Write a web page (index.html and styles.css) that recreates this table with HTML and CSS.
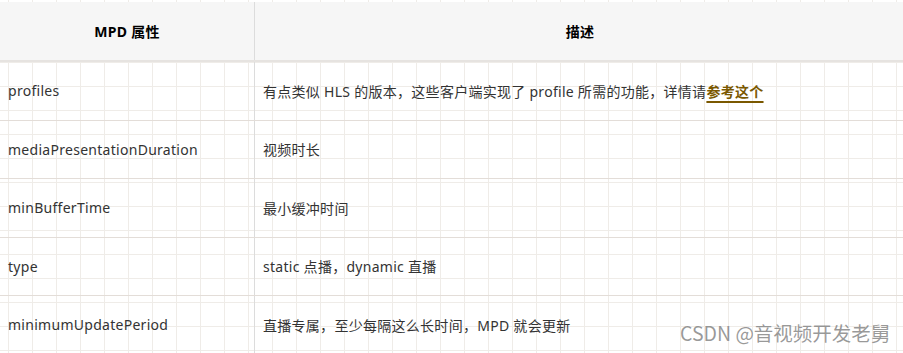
FILE: index.html
```html
<!DOCTYPE html>
<html lang="zh-CN">
<head>
<meta charset="utf-8">
<title>MPD 属性</title>
<link rel="stylesheet" href="styles.css">
</head>
<body>
<div class="page">
  <table class="mpd">
    <thead>
      <tr><th class="c1">MPD 属性</th><th class="c2">描述</th></tr>
    </thead>
    <tbody>
      <tr><td>profiles</td><td>有点类似 HLS 的版本，这些客户端实现了 profile 所需的功能，详情请<a class="ref" href="#">参考这个</a></td></tr>
      <tr><td>mediaPresentationDuration</td><td>视频时长</td></tr>
      <tr><td>minBufferTime</td><td>最小缓冲时间</td></tr>
      <tr><td>type</td><td>static 点播，dynamic 直播</td></tr>
      <tr><td>minimumUpdatePeriod</td><td>直播专属，至少每隔这么长时间，MPD 就会更新</td></tr>
    </tbody>
  </table>
  <div class="watermark">CSDN @音视频开发老舅</div>
</div>
</body>
</html>
```

FILE: styles.css
```css
html, body {
  margin: 0;
  padding: 0;
}
body {
  width: 903px;
  height: 353px;
  overflow: hidden;
  background-color: #fff;
  background-image:
    linear-gradient(to right, #efece8 1px, transparent 1px),
    linear-gradient(to bottom, #efece8 1px, transparent 1px);
  background-size: 24px 24px;
  background-position: 8px 14px;
  font-family: "Noto Sans", "Noto Sans CJK SC", sans-serif;
  font-size: 14px;
  color: #333;
}
.page {
  position: relative;
  width: 903px;
  height: 353px;
  padding-top: 2px;
  box-sizing: border-box;
}
.mpd {
  border-collapse: collapse;
  width: 905px;
  table-layout: fixed;
  letter-spacing: 0.28px;
}
.mpd th {
  background: #f6f6f6;
  font-weight: bold;
  color: #000;
  height: 58px;
  padding: 0 8px;
  text-align: center;
  border-bottom: 2px solid #e6e3e0;
}
.mpd th.c1 {
  width: 238px;
  border-right: 1px solid #dcdcdc;
}
.mpd td {
  height: 57.5px;
  padding: 0 8px;
  border-bottom: 1px solid #e3ddd8;
  vertical-align: middle;
}
.mpd td:first-child {
  border-right: 1px solid #dcdcdc;
}
.ref {
  color: #7a5800;
  font-weight: bold;
  text-decoration: underline;
  text-underline-offset: 4px;
  text-decoration-thickness: 1.5px;
}
.watermark {
  position: absolute;
  left: 680px;
  top: 320px;
  font-family: "Noto Sans CJK SC", sans-serif;
  font-size: 19.5px;
  line-height: 26px;
  color: rgba(120, 120, 120, 0.75);
}
```
